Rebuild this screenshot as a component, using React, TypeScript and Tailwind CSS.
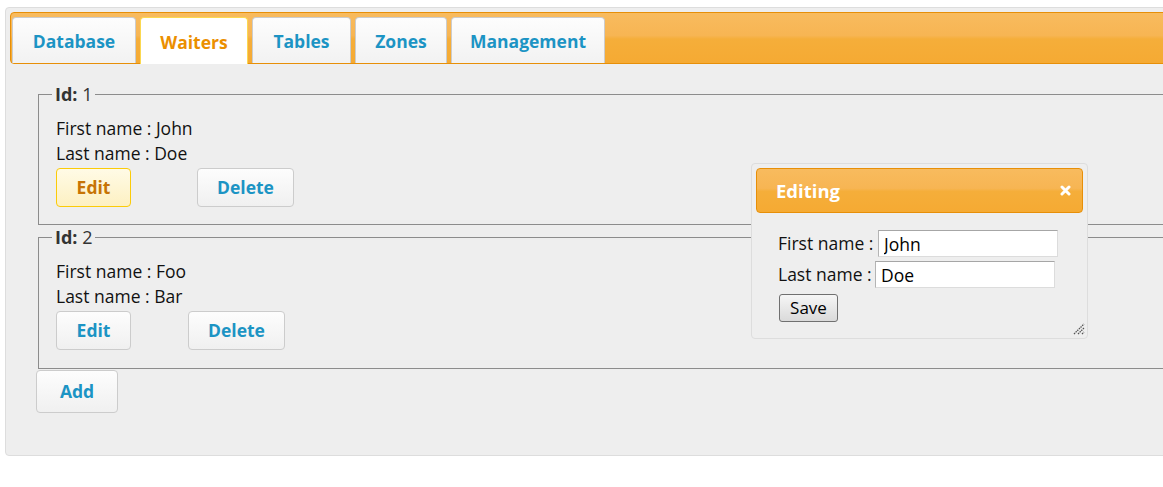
const tabs = [
  { label: "Database", w: "w-[124px]" },
  { label: "Waiters", w: "w-[108px]", active: true },
  { label: "Tables", w: "w-[99px]" },
  { label: "Zones", w: "w-[92px]" },
  { label: "Management", w: "w-[154px]" },
];

function Tab({ label, w, active }: { label: string; w: string; active?: boolean }) {
  if (active) {
    return (
      <li className={`${w} mb-[-1px] mr-[4px] flex h-[47px] items-center justify-center rounded-t-[4px] border border-b-0 border-[#fbd850] bg-white pt-[2px] text-[17.5px] font-bold text-[#eb8f00]`}>
        {label}
      </li>
    );
  }
  return (
    <li className={`${w} mr-[4px] flex h-[46px] items-center justify-center rounded-t-[4px] border border-b-0 border-[#cccccc] bg-linear-to-b from-[#fdfdfd] to-[#f2f2f2] pt-[2px] text-[17.5px] font-bold text-[#1c94c4]`}>
      {label}
    </li>
  );
}

function Button({ children, className, hover }: { children: string; className: string; hover?: boolean }) {
  const look = hover
    ? "border-[#fbcb09] from-[#fffbe6] to-[#fdf0c2] text-[#c77405]"
    : "border-[#cccccc] from-[#fdfdfd] to-[#f0f0f0] text-[#1c94c4]";
  return (
    <button className={`${className} ${look} flex items-center justify-center rounded-[4px] border bg-linear-to-b text-[17.5px] font-bold`}>
      {children}
    </button>
  );
}

function Waiter({ id, first, last, gap, hover, className }: { id: number; first: string; last: string; gap: string; hover?: boolean; className: string }) {
  return (
    <fieldset className={`${className} mx-[2px] border border-[#8c8c8c] px-[17px] pt-[12px]`}>
      <legend className="-ml-[4px] px-[3px] text-[18px] leading-[20px] text-[#333333]">
        <b>Id:</b> {id}
      </legend>
      <div className="text-[17.5px] font-medium leading-[25px] text-[#111111]">First name : {first}</div>
      <div className="text-[17.5px] font-medium leading-[25px] text-[#111111]">Last name : {last}</div>
      <div className="mt-[2px] flex">
        <Button className="h-[39px] w-[75px]" hover={hover}>Edit</Button>
        <Button className={`${gap} h-[39px] w-[97px]`}>Delete</Button>
      </div>
    </fieldset>
  );
}

function EditDialog() {
  return (
    <div className="absolute left-[745px] top-[155px] h-[176px] w-[337px] rounded-[4px] border border-[#dddddd] bg-[#eeeeee] p-[4px]">
      <div className="flex h-[45px] items-center justify-between rounded-[4px] border border-[#e78f08] bg-[linear-gradient(to_bottom,#f8bb5e_0%,#f7b553_45%,#f5ae3a_52%,#f5aa33_100%)] pl-[19px] pr-[11px]">
        <span className="text-[18.5px] font-bold text-white">Editing</span>
        <svg width="11" height="11" viewBox="0 0 11 11">
          <path d="M2 2 L9 9 M9 2 L2 9" stroke="white" strokeWidth="3" strokeLinecap="round" />
        </svg>
      </div>
      <div className="pl-[22px] pt-[17px] text-[17.5px] font-medium text-[#111111]">
        <div className="flex items-center">
          <span className="w-[100px]">First name :</span>
          <input readOnly value="John" className="h-[27px] w-[180px] border border-[#dcdcdc] border-l-[#b4b4b4] border-t-[#a6a6a6] bg-white px-[5px] text-black outline-none" />
        </div>
        <div className="mt-[4px] flex items-center">
          <span className="w-[97px]">Last name :</span>
          <input readOnly value="Doe" className="h-[27px] w-[180px] border border-[#dcdcdc] border-l-[#b4b4b4] border-t-[#a6a6a6] bg-white px-[5px] text-black outline-none" />
        </div>
        <button className="ml-[1px] mt-[6px] flex h-[28px] w-[59px] items-center justify-center rounded-[3px] border border-[#707070] bg-linear-to-b from-[#f6f6f6] to-[#dadada] text-[17px] text-black">
          Save
        </button>
      </div>
      <svg className="absolute bottom-[3px] right-[2px]" width="12" height="12" viewBox="0 0 12 12">
        <path d="M1 11 L11 1 M5 11 L11 5 M9 11 L11 9" stroke="#555555" strokeWidth="1.3" strokeDasharray="1.5 0.8" />
      </svg>
    </div>
  );
}

export default function App() {
  return (
    <div className="h-[487px] w-full overflow-hidden bg-white pl-[5px] pt-[7px] font-['Open_Sans',sans-serif]">
      <div className="relative h-[449px] w-[1200px] rounded-[4px] border border-[#dddddd] bg-[#eeeeee] p-[4px]">
        <ul className="flex h-[52px] items-end rounded-[4px] border border-[#e78f08] bg-[linear-gradient(to_bottom,#f8bb5e_0%,#f7b553_45%,#f5ae3a_52%,#f5aa33_100%)] pl-[1px]">
          {tabs.map((t) => (
            <Tab key={t.label} {...t} />
          ))}
        </ul>
        <div className="pl-[26px] pt-[20px]">
          <Waiter id={1} first="John" last="Doe" gap="ml-[66px]" hover className="pb-[17px]" />
          <Waiter id={2} first="Foo" last="Bar" gap="ml-[57px]" className="mt-[2px] pb-[18px]" />
          <Button className="mt-[1px] h-[43px] w-[82px]">Add</Button>
        </div>
        <EditDialog />
      </div>
    </div>
  );
}
